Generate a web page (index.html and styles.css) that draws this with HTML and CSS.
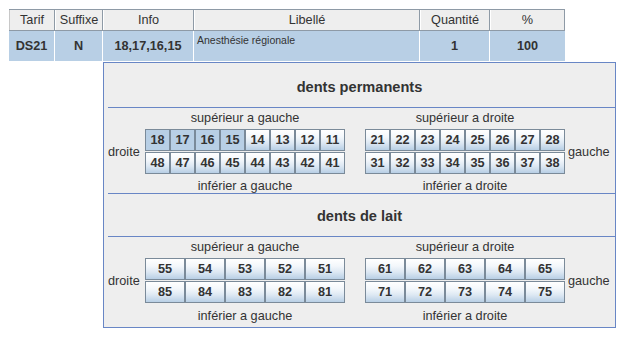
FILE: index.html
```html
<!DOCTYPE html>
<html lang="fr">
<head>
    <meta charset="UTF-8">
    <title>Acte dentaire</title>
    <link rel="stylesheet" href="styles.css">
</head>
<body>
  <div class="table">
    <div class="row head">
      <div class="cell">Tarif</div>
      <div class="cell">Suffixe</div>
      <div class="cell">Info</div>
      <div class="cell">Libellé</div>
      <div class="cell">Quantité</div>
      <div class="cell">%</div>
    </div>
    <div class="row data">
      <div class="cell">DS21</div>
      <div class="cell">N</div>
      <div class="cell">18,17,16,15</div>
      <div class="cell libelle">Anesthésie régionale</div>
      <div class="cell">1</div>
      <div class="cell">100</div>
    </div>
  </div>

  <div class="popup">
    <div class="title">dents permanents</div>
    <div class="sep"></div>
    <div class="jaw">
      <div class="lbl col-l">supérieur a gauche</div>
      <div class="lbl col-r">supérieur a droite</div>
      <div class="side col-side-l">droite</div>
      <div class="teeth perm col-l">
        <button class="tooth on">18</button>
        <button class="tooth on">17</button>
        <button class="tooth on">16</button>
        <button class="tooth on">15</button>
        <button class="tooth">14</button>
        <button class="tooth">13</button>
        <button class="tooth">12</button>
        <button class="tooth">11</button>
        <button class="tooth">48</button>
        <button class="tooth">47</button>
        <button class="tooth">46</button>
        <button class="tooth">45</button>
        <button class="tooth">44</button>
        <button class="tooth">43</button>
        <button class="tooth">42</button>
        <button class="tooth">41</button>
      </div>
      <div class="teeth perm col-r">
        <button class="tooth">21</button>
        <button class="tooth">22</button>
        <button class="tooth">23</button>
        <button class="tooth">24</button>
        <button class="tooth">25</button>
        <button class="tooth">26</button>
        <button class="tooth">27</button>
        <button class="tooth">28</button>
        <button class="tooth">31</button>
        <button class="tooth">32</button>
        <button class="tooth">33</button>
        <button class="tooth">34</button>
        <button class="tooth">35</button>
        <button class="tooth">36</button>
        <button class="tooth">37</button>
        <button class="tooth">38</button>
      </div>
      <div class="side col-side-r">gauche</div>
      <div class="lbl low col-l">inférier a gauche</div>
      <div class="lbl low col-r">inférier a droite</div>
    </div>
    <div class="sep"></div>

    <div class="title second">dents de lait</div>
    <div class="sep"></div>
    <div class="jaw last">
      <div class="lbl col-l">supérieur a gauche</div>
      <div class="lbl col-r">supérieur a droite</div>
      <div class="side col-side-l">droite</div>
      <div class="teeth milk col-l">
        <button class="tooth">55</button>
        <button class="tooth">54</button>
        <button class="tooth">53</button>
        <button class="tooth">52</button>
        <button class="tooth">51</button>
        <button class="tooth">85</button>
        <button class="tooth">84</button>
        <button class="tooth">83</button>
        <button class="tooth">82</button>
        <button class="tooth">81</button>
      </div>
      <div class="teeth milk col-r">
        <button class="tooth">61</button>
        <button class="tooth">62</button>
        <button class="tooth">63</button>
        <button class="tooth">64</button>
        <button class="tooth">65</button>
        <button class="tooth">71</button>
        <button class="tooth">72</button>
        <button class="tooth">73</button>
        <button class="tooth">74</button>
        <button class="tooth">75</button>
      </div>
      <div class="side col-side-r">gauche</div>
      <div class="lbl low col-l">inférier a gauche</div>
      <div class="lbl low col-r">inférier a droite</div>
    </div>
  </div>
</body>
</html>
```

FILE: styles.css
```css
body {
    font-family: "Liberation Sans", Arial, sans-serif;
    font-size: 12.7px;
    color: #333333;
    background-color: #ffffff;
    margin: 0;
    padding: 9px;
}

/* table */
.table {
    width: 556px;
}

.row {
    display: grid;
    grid-template-columns: 46px 48px 91px 226px 70px 75px;
}

.head {
    background-color: #eeeeee;
    border-top: 1px solid #8e9aa6;
    border-bottom: 1px solid #8e9aa6;
}

.head .cell {
    height: 20px;
    line-height: 20px;
    text-align: center;
    border-right: 1px solid #8e9aa6;
    border-left: 1px solid #ffffff;
}

.head .cell:first-child {
    border-left: 1px solid #c8c8c8;
}

.data {
    background-color: #b8cfe5;
}

.data .cell {
    height: 30px;
    line-height: 30px;
    text-align: center;
    font-weight: bold;
    border-right: 1px solid #ffffff;
}

.data .cell:last-child {
    border-right: none;
}

.data .libelle {
    font-weight: normal;
    font-size: 10.5px;
    line-height: 12px;
    text-align: left;
    padding: 3px 0 0 3px;
    height: 27px;
}

/* popup with the teeth */
.popup {
    position: absolute;
    top: 62px;
    left: 103px;
    width: 511px;
    height: 264px;
    border: 1px solid #6886c5;
    background-color: #eeeeee;
}

.title {
    height: 44px;
    box-sizing: border-box;
    padding-top: 15px;
    line-height: 18px;
    text-align: center;
    font-weight: bold;
    font-size: 14.6px;
}

.title.second {
    height: 42px;
    padding-top: 13px;
}

.sep {
    height: 1px;
    margin-left: 4px;
    background-color: #6886c5;
}

.jaw {
    display: grid;
    grid-template-columns: 37px 200px 20px 200px 1fr;
    grid-template-rows: 21px 45px 19px;
    padding-left: 4px;
}

.jaw.last {
    grid-template-rows: 21px 45px 24px;
}

.lbl {
    text-align: center;
    line-height: 21px;
}

.lbl.low {
    line-height: 14px;
    padding-top: 5px;
}

.jaw.last .lbl.low {
    padding-top: 6px;
}

.col-side-l {
    grid-column: 1;
    grid-row: 2;
}

.col-l {
    grid-column: 2;
}

.col-r {
    grid-column: 4;
}

.col-side-r {
    grid-column: 5;
    grid-row: 2;
    padding-left: 3px;
}

.side {
    display: flex;
    align-items: center;
}

.teeth {
    display: grid;
    grid-template-rows: 22px 22px;
    row-gap: 1px;
}

.teeth.perm {
    grid-template-columns: repeat(8, 25px);
}

.teeth.milk {
    grid-template-columns: repeat(5, 40px);
}

.tooth {
    margin: 0;
    padding: 0;
    font-family: "Liberation Sans", Arial, sans-serif;
    font-size: 12.7px;
    font-weight: bold;
    color: #333333;
    border: 1px solid #7a8a99;
    background: linear-gradient(#ffffff 0%, #f3f7fb 35%, #dde8f3 65%, #b8cfe5 100%);
}

.tooth.on {
    background: #b8cfe5;
}
```
